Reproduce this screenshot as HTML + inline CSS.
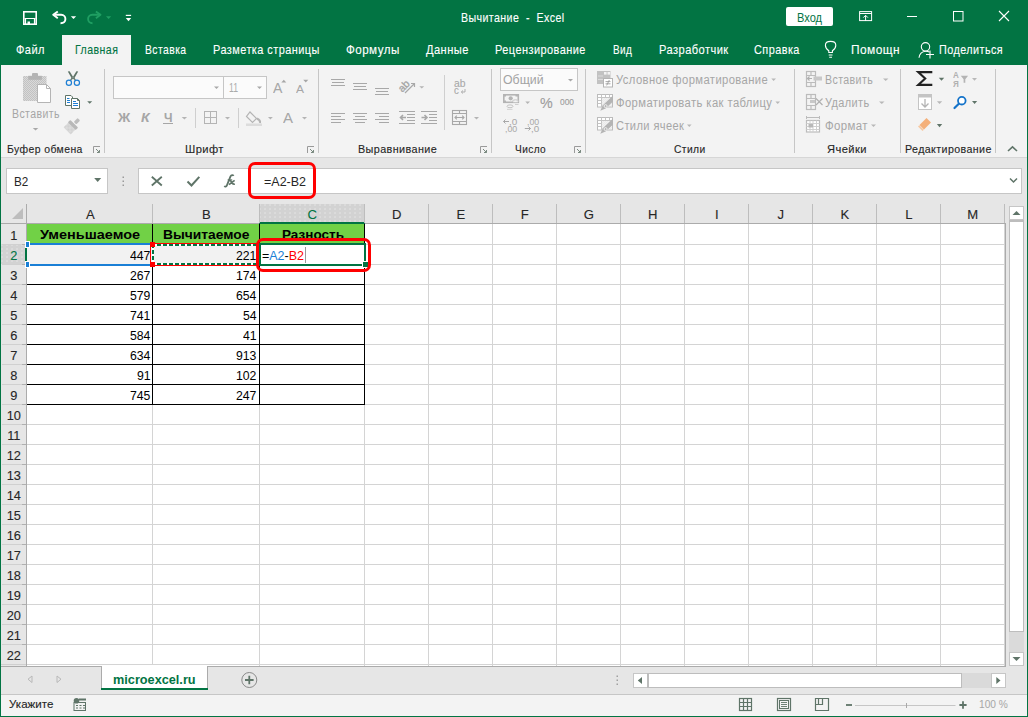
<!DOCTYPE html><html><head><meta charset="utf-8"><style>
html,body{margin:0;padding:0;}
body{width:1028px;height:717px;overflow:hidden;position:relative;background:#fff;font-family:"Liberation Sans",sans-serif;}
.t{position:absolute;white-space:pre;line-height:1;transform-origin:0 0;}
.r{position:absolute;}
svg.ov{position:absolute;left:0;top:0;}
</style></head><body>
<div class="r" style="left:0px;top:0px;width:1028px;height:65px;background:#027443;"></div>
<div class="r" style="left:0px;top:65px;width:1028px;height:92px;background:#f3f3f3;"></div>
<div class="r" style="left:0px;top:157px;width:1028px;height:1px;background:#d6d6d6;"></div>
<div class="r" style="left:0px;top:158px;width:1028px;height:46px;background:#e6e6e6;"></div>
<div class="r" style="left:62px;top:35px;width:69px;height:30px;background:#f3f3f3;"></div>
<div class="t" style="left:461.40px;top:12.00px;font-size:12.602px;color:#ffffff;transform:scaleX(0.8450);letter-spacing:0.473px;-webkit-text-stroke:0.12px currentColor;">Вычитание  -  Excel</div>
<div class="r" style="left:786px;top:7px;width:47px;height:19px;background:#ffffff;border-radius:2px;"></div>
<div class="t" style="left:797.00px;top:12.00px;font-size:12.500px;color:#027443;transform:scaleX(0.8842);">Вход</div>
<div class="t" style="left:16.40px;top:44.00px;font-size:12.398px;color:#ffffff;transform:scaleX(0.8938);letter-spacing:0.503px;-webkit-text-stroke:0.12px currentColor;">Файл</div>
<div class="t" style="left:74.60px;top:44.00px;font-size:12.398px;color:#027443;transform:scaleX(0.8540);letter-spacing:0.527px;-webkit-text-stroke:0.12px currentColor;">Главная</div>
<div class="t" style="left:145.40px;top:44.00px;font-size:12.398px;color:#ffffff;transform:scaleX(0.8352);letter-spacing:0.539px;-webkit-text-stroke:0.12px currentColor;">Вставка</div>
<div class="t" style="left:213.00px;top:44.00px;font-size:12.398px;color:#ffffff;transform:scaleX(0.8837);letter-spacing:0.509px;-webkit-text-stroke:0.12px currentColor;">Разметка страницы</div>
<div class="t" style="left:345.90px;top:44.00px;font-size:12.398px;color:#ffffff;transform:scaleX(0.9396);letter-spacing:0.479px;-webkit-text-stroke:0.12px currentColor;">Формулы</div>
<div class="t" style="left:426.00px;top:44.00px;font-size:12.398px;color:#ffffff;transform:scaleX(0.8985);letter-spacing:0.501px;-webkit-text-stroke:0.12px currentColor;">Данные</div>
<div class="t" style="left:495.00px;top:44.00px;font-size:12.398px;color:#ffffff;transform:scaleX(0.8852);letter-spacing:0.508px;-webkit-text-stroke:0.12px currentColor;">Рецензирование</div>
<div class="t" style="left:612.80px;top:44.00px;font-size:12.398px;color:#ffffff;transform:scaleX(0.8026);letter-spacing:0.561px;-webkit-text-stroke:0.12px currentColor;">Вид</div>
<div class="t" style="left:658.60px;top:44.00px;font-size:12.398px;color:#ffffff;transform:scaleX(0.8968);letter-spacing:0.502px;-webkit-text-stroke:0.12px currentColor;">Разработчик</div>
<div class="t" style="left:754.00px;top:44.00px;font-size:12.398px;color:#ffffff;transform:scaleX(0.8797);letter-spacing:0.512px;-webkit-text-stroke:0.12px currentColor;">Справка</div>
<div class="t" style="left:850.60px;top:44.00px;font-size:12.398px;color:#ffffff;transform:scaleX(0.9621);letter-spacing:0.468px;-webkit-text-stroke:0.12px currentColor;">Помощн</div>
<div class="t" style="left:938.50px;top:44.00px;font-size:12.398px;color:#ffffff;transform:scaleX(0.8727);letter-spacing:0.516px;-webkit-text-stroke:0.12px currentColor;">Поделиться</div>
<div class="t" style="left:6.60px;top:144.00px;font-size:10.974px;color:#262626;transform:scaleX(0.9520);letter-spacing:0.420px;-webkit-text-stroke:0.12px currentColor;">Буфер обмена</div>
<div class="t" style="left:184.60px;top:144.00px;font-size:10.974px;color:#262626;transform:scaleX(1.0193);letter-spacing:0.392px;-webkit-text-stroke:0.12px currentColor;">Шрифт</div>
<div class="t" style="left:357.60px;top:144.00px;font-size:10.974px;color:#262626;transform:scaleX(0.9850);letter-spacing:0.406px;-webkit-text-stroke:0.12px currentColor;">Выравнивание</div>
<div class="t" style="left:514.60px;top:144.00px;font-size:10.974px;color:#262626;transform:scaleX(0.9220);letter-spacing:0.434px;-webkit-text-stroke:0.12px currentColor;">Число</div>
<div class="t" style="left:674.30px;top:144.00px;font-size:10.974px;color:#262626;transform:scaleX(0.9362);letter-spacing:0.427px;-webkit-text-stroke:0.12px currentColor;">Стили</div>
<div class="t" style="left:827.00px;top:144.00px;font-size:10.974px;color:#262626;transform:scaleX(1.0161);letter-spacing:0.394px;-webkit-text-stroke:0.12px currentColor;">Ячейки</div>
<div class="t" style="left:904.60px;top:144.00px;font-size:10.974px;color:#262626;transform:scaleX(0.9713);letter-spacing:0.412px;-webkit-text-stroke:0.12px currentColor;">Редактирование</div>
<div class="r" style="left:104px;top:69px;width:1px;height:84px;background:#c6c6c6;"></div>
<div class="r" style="left:318px;top:69px;width:1px;height:84px;background:#c6c6c6;"></div>
<div class="r" style="left:491px;top:69px;width:1px;height:84px;background:#c6c6c6;"></div>
<div class="r" style="left:585px;top:69px;width:1px;height:84px;background:#c6c6c6;"></div>
<div class="r" style="left:794px;top:69px;width:1px;height:84px;background:#c6c6c6;"></div>
<div class="r" style="left:900px;top:69px;width:1px;height:84px;background:#c6c6c6;"></div>
<div class="r" style="left:995px;top:69px;width:1px;height:84px;background:#c6c6c6;"></div>
<div class="t" style="left:11.60px;top:108.00px;font-size:12.500px;color:#a6a6a6;transform:scaleX(0.8417);letter-spacing:0.475px;">Вставить</div>
<div class="r" style="left:113px;top:76px;width:111px;height:23px;background:#fbfbfb;box-sizing:border-box;border:1px solid #c6c6c6;"></div>
<div class="r" style="left:223px;top:76px;width:44px;height:23px;background:#fbfbfb;box-sizing:border-box;border:1px solid #c6c6c6;"></div>
<div class="t" style="left:228.50px;top:82.00px;font-size:12.500px;color:#ababab;transform:scaleX(0.6936);">11</div>
<div class="t" style="left:273.30px;top:80.00px;font-size:15.407px;color:#a6a6a6;transform:scaleX(0.9147);">A</div>
<div class="t" style="left:295.90px;top:84.00px;font-size:11.192px;color:#a6a6a6;transform:scaleX(1.0717);">A</div>
<div class="t" style="left:117.84px;top:112.00px;font-size:12.791px;color:#a6a6a6;font-weight:bold;transform:scaleX(1.0630);">Ж</div>
<div class="t" style="left:141.00px;top:112.00px;font-size:12.791px;color:#a6a6a6;font-weight:bold;transform:scaleX(1.0986);font-style:italic;">К</div>
<div class="t" style="left:164.00px;top:112.00px;font-size:12.791px;color:#a6a6a6;font-weight:bold;transform:scaleX(0.9453);">Ч</div>
<div class="r" style="left:163px;top:123px;width:10px;height:1px;background:#a6a6a6;"></div>
<div class="r" style="left:195px;top:108px;width:1px;height:20px;background:#cfcfcf;"></div>
<div class="r" style="left:238px;top:108px;width:1px;height:20px;background:#cfcfcf;"></div>
<div class="t" style="left:283.00px;top:111.00px;font-size:14.971px;color:#a6a6a6;transform:scaleX(1.0014);">A</div>
<div class="r" style="left:444px;top:75px;width:1px;height:55px;background:#cfcfcf;"></div>
<div class="t" style="left:454.00px;top:78.00px;font-size:10.610px;color:#a8a8a8;transform:scaleX(0.9747);-webkit-text-stroke:0.12px currentColor;">ab</div>
<div class="t" style="left:454.00px;top:86.00px;font-size:10.029px;color:#a8a8a8;transform:scaleX(0.9572);-webkit-text-stroke:0.12px currentColor;">c</div>
<div class="r" style="left:500px;top:68px;width:78px;height:23px;background:#fbfbfb;box-sizing:border-box;border:1px solid #c6c6c6;"></div>
<div class="t" style="left:503.40px;top:74.00px;font-size:12.645px;color:#a3a3a3;transform:scaleX(0.9756);">Общий</div>
<div class="t" style="left:539.50px;top:95.00px;font-size:15.262px;color:#9c9c9c;transform:scaleX(0.9361);-webkit-text-stroke:0.12px currentColor;">%</div>
<div class="t" style="left:560.00px;top:97.00px;font-size:9.593px;color:#9c9c9c;transform:scaleX(0.8749);-webkit-text-stroke:0.12px currentColor;">000</div>
<div class="t" style="left:509.00px;top:119.00px;font-size:8.140px;color:#a8a8a8;transform:scaleX(1.2227);">,0</div>
<div class="t" style="left:505.00px;top:126.00px;font-size:8.140px;color:#a8a8a8;transform:scaleX(1.0872);">,00</div>
<div class="t" style="left:527.00px;top:119.00px;font-size:8.140px;color:#a8a8a8;transform:scaleX(1.0783);">,00</div>
<div class="t" style="left:531.00px;top:126.00px;font-size:8.140px;color:#a8a8a8;transform:scaleX(1.2079);">,0</div>
<div class="t" style="left:616.00px;top:74.00px;font-size:12.500px;color:#a6a6a6;transform:scaleX(0.8992);letter-spacing:0.445px;">Условное форматирование</div>
<div class="t" style="left:616.00px;top:97.00px;font-size:12.500px;color:#a6a6a6;transform:scaleX(0.9002);letter-spacing:0.444px;">Форматировать как таблицу</div>
<div class="t" style="left:616.00px;top:120.00px;font-size:12.500px;color:#a6a6a6;transform:scaleX(0.8863);letter-spacing:0.451px;">Стили ячеек</div>
<div class="t" style="left:825.20px;top:74.00px;font-size:12.500px;color:#a6a6a6;transform:scaleX(0.8474);letter-spacing:0.472px;">Вставить</div>
<div class="t" style="left:825.00px;top:97.00px;font-size:12.500px;color:#a6a6a6;transform:scaleX(0.8759);letter-spacing:0.457px;">Удалить</div>
<div class="t" style="left:825.00px;top:120.00px;font-size:12.500px;color:#a6a6a6;transform:scaleX(0.9144);letter-spacing:0.437px;">Формат</div>
<div class="t" style="left:953.00px;top:71.00px;font-size:8.721px;color:#b0b0b0;font-weight:bold;transform:scaleX(0.9211);">А</div>
<div class="t" style="left:953.00px;top:80.00px;font-size:8.721px;color:#b0b0b0;font-weight:bold;transform:scaleX(0.9250);">Я</div>
<div class="r" style="left:6px;top:168px;width:102px;height:26px;background:#ffffff;box-sizing:border-box;border:1px solid #c6c6c6;"></div>
<div class="t" style="left:13.70px;top:176.00px;font-size:12.936px;color:#262626;transform:scaleX(0.9039);">B2</div>
<div class="r" style="left:138px;top:168px;width:884px;height:26px;background:#ffffff;box-sizing:border-box;border:1px solid #c6c6c6;"></div>
<div class="t" style="left:263.90px;top:176.00px;font-size:12.936px;color:#262626;transform:scaleX(0.9677);">=A2-B2</div>
<div class="r" style="left:1px;top:204px;width:1004px;height:19px;background:#e6e6e6;"></div>
<div class="r" style="left:1px;top:223px;width:1004px;height:1px;background:#ababab;"></div>
<div class="r" style="left:1px;top:224px;width:25px;height:442px;background:#e6e6e6;"></div>
<div class="r" style="left:26px;top:204px;width:1px;height:462px;background:#ababab;"></div>
<div class="r" style="left:27px;top:224px;width:978px;height:442px;background:#ffffff;"></div>
<div class="r" style="left:1005px;top:194px;width:22px;height:472px;background:#e6e6e6;"></div>
<div class="r" style="left:1px;top:244px;width:25px;height:20px;background:#d2d2d2;background-image:radial-gradient(circle at 1px 1px,#e4e4e4 0.5px,transparent 0.9px);background-size:5px 4px;"></div>
<div class="r" style="left:25px;top:244px;width:2px;height:20px;background:#027443;"></div>
<div class="r" style="left:259px;top:204px;width:106px;height:18px;background:#d2d2d2;background-image:radial-gradient(circle at 1px 1px,#e4e4e4 0.5px,transparent 0.9px);background-size:5px 4px;"></div>
<div class="r" style="left:259px;top:222px;width:106px;height:2px;background:#027443;"></div>
<div class="r" style="left:152px;top:224px;width:1px;height:442px;background:#d4d4d4;"></div>
<div class="r" style="left:152px;top:204px;width:1px;height:19px;background:#bdbdbd;"></div>
<div class="r" style="left:259px;top:224px;width:1px;height:442px;background:#d4d4d4;"></div>
<div class="r" style="left:259px;top:204px;width:1px;height:19px;background:#bdbdbd;"></div>
<div class="r" style="left:364px;top:224px;width:1px;height:442px;background:#d4d4d4;"></div>
<div class="r" style="left:364px;top:204px;width:1px;height:19px;background:#bdbdbd;"></div>
<div class="r" style="left:428px;top:224px;width:1px;height:442px;background:#d4d4d4;"></div>
<div class="r" style="left:428px;top:204px;width:1px;height:19px;background:#bdbdbd;"></div>
<div class="r" style="left:492px;top:224px;width:1px;height:442px;background:#d4d4d4;"></div>
<div class="r" style="left:492px;top:204px;width:1px;height:19px;background:#bdbdbd;"></div>
<div class="r" style="left:556px;top:224px;width:1px;height:442px;background:#d4d4d4;"></div>
<div class="r" style="left:556px;top:204px;width:1px;height:19px;background:#bdbdbd;"></div>
<div class="r" style="left:620px;top:224px;width:1px;height:442px;background:#d4d4d4;"></div>
<div class="r" style="left:620px;top:204px;width:1px;height:19px;background:#bdbdbd;"></div>
<div class="r" style="left:684px;top:224px;width:1px;height:442px;background:#d4d4d4;"></div>
<div class="r" style="left:684px;top:204px;width:1px;height:19px;background:#bdbdbd;"></div>
<div class="r" style="left:748px;top:224px;width:1px;height:442px;background:#d4d4d4;"></div>
<div class="r" style="left:748px;top:204px;width:1px;height:19px;background:#bdbdbd;"></div>
<div class="r" style="left:812px;top:224px;width:1px;height:442px;background:#d4d4d4;"></div>
<div class="r" style="left:812px;top:204px;width:1px;height:19px;background:#bdbdbd;"></div>
<div class="r" style="left:876px;top:224px;width:1px;height:442px;background:#d4d4d4;"></div>
<div class="r" style="left:876px;top:204px;width:1px;height:19px;background:#bdbdbd;"></div>
<div class="r" style="left:940px;top:224px;width:1px;height:442px;background:#d4d4d4;"></div>
<div class="r" style="left:940px;top:204px;width:1px;height:19px;background:#bdbdbd;"></div>
<div class="r" style="left:1004px;top:224px;width:1px;height:442px;background:#d4d4d4;"></div>
<div class="r" style="left:1004px;top:204px;width:1px;height:19px;background:#bdbdbd;"></div>
<div class="r" style="left:27px;top:244px;width:978px;height:1px;background:#d4d4d4;"></div>
<div class="r" style="left:2px;top:244px;width:20px;height:1px;background:#d0d0d0;"></div>
<div class="r" style="left:22px;top:244px;width:4px;height:1px;background:#b0b0b0;"></div>
<div class="r" style="left:27px;top:264px;width:978px;height:1px;background:#d4d4d4;"></div>
<div class="r" style="left:2px;top:264px;width:20px;height:1px;background:#d0d0d0;"></div>
<div class="r" style="left:22px;top:264px;width:4px;height:1px;background:#b0b0b0;"></div>
<div class="r" style="left:27px;top:284px;width:978px;height:1px;background:#d4d4d4;"></div>
<div class="r" style="left:2px;top:284px;width:20px;height:1px;background:#d0d0d0;"></div>
<div class="r" style="left:22px;top:284px;width:4px;height:1px;background:#b0b0b0;"></div>
<div class="r" style="left:27px;top:304px;width:978px;height:1px;background:#d4d4d4;"></div>
<div class="r" style="left:2px;top:304px;width:20px;height:1px;background:#d0d0d0;"></div>
<div class="r" style="left:22px;top:304px;width:4px;height:1px;background:#b0b0b0;"></div>
<div class="r" style="left:27px;top:324px;width:978px;height:1px;background:#d4d4d4;"></div>
<div class="r" style="left:2px;top:324px;width:20px;height:1px;background:#d0d0d0;"></div>
<div class="r" style="left:22px;top:324px;width:4px;height:1px;background:#b0b0b0;"></div>
<div class="r" style="left:27px;top:344px;width:978px;height:1px;background:#d4d4d4;"></div>
<div class="r" style="left:2px;top:344px;width:20px;height:1px;background:#d0d0d0;"></div>
<div class="r" style="left:22px;top:344px;width:4px;height:1px;background:#b0b0b0;"></div>
<div class="r" style="left:27px;top:364px;width:978px;height:1px;background:#d4d4d4;"></div>
<div class="r" style="left:2px;top:364px;width:20px;height:1px;background:#d0d0d0;"></div>
<div class="r" style="left:22px;top:364px;width:4px;height:1px;background:#b0b0b0;"></div>
<div class="r" style="left:27px;top:384px;width:978px;height:1px;background:#d4d4d4;"></div>
<div class="r" style="left:2px;top:384px;width:20px;height:1px;background:#d0d0d0;"></div>
<div class="r" style="left:22px;top:384px;width:4px;height:1px;background:#b0b0b0;"></div>
<div class="r" style="left:27px;top:404px;width:978px;height:1px;background:#d4d4d4;"></div>
<div class="r" style="left:2px;top:404px;width:20px;height:1px;background:#d0d0d0;"></div>
<div class="r" style="left:22px;top:404px;width:4px;height:1px;background:#b0b0b0;"></div>
<div class="r" style="left:27px;top:424px;width:978px;height:1px;background:#d4d4d4;"></div>
<div class="r" style="left:2px;top:424px;width:20px;height:1px;background:#d0d0d0;"></div>
<div class="r" style="left:22px;top:424px;width:4px;height:1px;background:#b0b0b0;"></div>
<div class="r" style="left:27px;top:444px;width:978px;height:1px;background:#d4d4d4;"></div>
<div class="r" style="left:2px;top:444px;width:20px;height:1px;background:#d0d0d0;"></div>
<div class="r" style="left:22px;top:444px;width:4px;height:1px;background:#b0b0b0;"></div>
<div class="r" style="left:27px;top:464px;width:978px;height:1px;background:#d4d4d4;"></div>
<div class="r" style="left:2px;top:464px;width:20px;height:1px;background:#d0d0d0;"></div>
<div class="r" style="left:22px;top:464px;width:4px;height:1px;background:#b0b0b0;"></div>
<div class="r" style="left:27px;top:484px;width:978px;height:1px;background:#d4d4d4;"></div>
<div class="r" style="left:2px;top:484px;width:20px;height:1px;background:#d0d0d0;"></div>
<div class="r" style="left:22px;top:484px;width:4px;height:1px;background:#b0b0b0;"></div>
<div class="r" style="left:27px;top:504px;width:978px;height:1px;background:#d4d4d4;"></div>
<div class="r" style="left:2px;top:504px;width:20px;height:1px;background:#d0d0d0;"></div>
<div class="r" style="left:22px;top:504px;width:4px;height:1px;background:#b0b0b0;"></div>
<div class="r" style="left:27px;top:524px;width:978px;height:1px;background:#d4d4d4;"></div>
<div class="r" style="left:2px;top:524px;width:20px;height:1px;background:#d0d0d0;"></div>
<div class="r" style="left:22px;top:524px;width:4px;height:1px;background:#b0b0b0;"></div>
<div class="r" style="left:27px;top:544px;width:978px;height:1px;background:#d4d4d4;"></div>
<div class="r" style="left:2px;top:544px;width:20px;height:1px;background:#d0d0d0;"></div>
<div class="r" style="left:22px;top:544px;width:4px;height:1px;background:#b0b0b0;"></div>
<div class="r" style="left:27px;top:564px;width:978px;height:1px;background:#d4d4d4;"></div>
<div class="r" style="left:2px;top:564px;width:20px;height:1px;background:#d0d0d0;"></div>
<div class="r" style="left:22px;top:564px;width:4px;height:1px;background:#b0b0b0;"></div>
<div class="r" style="left:27px;top:584px;width:978px;height:1px;background:#d4d4d4;"></div>
<div class="r" style="left:2px;top:584px;width:20px;height:1px;background:#d0d0d0;"></div>
<div class="r" style="left:22px;top:584px;width:4px;height:1px;background:#b0b0b0;"></div>
<div class="r" style="left:27px;top:604px;width:978px;height:1px;background:#d4d4d4;"></div>
<div class="r" style="left:2px;top:604px;width:20px;height:1px;background:#d0d0d0;"></div>
<div class="r" style="left:22px;top:604px;width:4px;height:1px;background:#b0b0b0;"></div>
<div class="r" style="left:27px;top:624px;width:978px;height:1px;background:#d4d4d4;"></div>
<div class="r" style="left:2px;top:624px;width:20px;height:1px;background:#d0d0d0;"></div>
<div class="r" style="left:22px;top:624px;width:4px;height:1px;background:#b0b0b0;"></div>
<div class="r" style="left:27px;top:644px;width:978px;height:1px;background:#d4d4d4;"></div>
<div class="r" style="left:2px;top:644px;width:20px;height:1px;background:#d0d0d0;"></div>
<div class="r" style="left:22px;top:644px;width:4px;height:1px;background:#b0b0b0;"></div>
<div class="r" style="left:27px;top:664px;width:978px;height:1px;background:#d4d4d4;"></div>
<div class="r" style="left:2px;top:664px;width:20px;height:1px;background:#d0d0d0;"></div>
<div class="r" style="left:22px;top:664px;width:4px;height:1px;background:#b0b0b0;"></div>
<div class="t" style="left:85.94px;top:208.00px;font-size:13.081px;color:#262626;transform:scaleX(1.0000);-webkit-text-stroke:0.12px currentColor;">A</div>
<div class="t" style="left:201.94px;top:208.00px;font-size:13.081px;color:#262626;transform:scaleX(1.0000);-webkit-text-stroke:0.12px currentColor;">B</div>
<div class="t" style="left:307.58px;top:208.00px;font-size:13.081px;color:#027443;transform:scaleX(1.0000);-webkit-text-stroke:0.12px currentColor;">C</div>
<div class="t" style="left:392.08px;top:208.00px;font-size:13.081px;color:#262626;transform:scaleX(1.0000);-webkit-text-stroke:0.12px currentColor;">D</div>
<div class="t" style="left:456.44px;top:208.00px;font-size:13.081px;color:#262626;transform:scaleX(1.0000);-webkit-text-stroke:0.12px currentColor;">E</div>
<div class="t" style="left:520.80px;top:208.00px;font-size:13.081px;color:#262626;transform:scaleX(1.0000);-webkit-text-stroke:0.12px currentColor;">F</div>
<div class="t" style="left:583.71px;top:208.00px;font-size:13.081px;color:#262626;transform:scaleX(1.0000);-webkit-text-stroke:0.12px currentColor;">G</div>
<div class="t" style="left:648.08px;top:208.00px;font-size:13.081px;color:#262626;transform:scaleX(1.0000);-webkit-text-stroke:0.12px currentColor;">H</div>
<div class="t" style="left:714.98px;top:208.00px;font-size:13.081px;color:#262626;transform:scaleX(1.0000);-webkit-text-stroke:0.12px currentColor;">I</div>
<div class="t" style="left:777.53px;top:208.00px;font-size:13.081px;color:#262626;transform:scaleX(1.0000);-webkit-text-stroke:0.12px currentColor;">J</div>
<div class="t" style="left:840.44px;top:208.00px;font-size:13.081px;color:#262626;transform:scaleX(1.0000);-webkit-text-stroke:0.12px currentColor;">K</div>
<div class="t" style="left:905.16px;top:208.00px;font-size:13.081px;color:#262626;transform:scaleX(1.0000);-webkit-text-stroke:0.12px currentColor;">L</div>
<div class="t" style="left:967.35px;top:208.00px;font-size:13.081px;color:#262626;transform:scaleX(1.0000);-webkit-text-stroke:0.12px currentColor;">M</div>
<div class="t" style="left:10.24px;top:230.00px;font-size:12.791px;color:#262626;transform:scaleX(1.0000);-webkit-text-stroke:0.12px currentColor;">1</div>
<div class="t" style="left:10.24px;top:250.00px;font-size:12.791px;color:#027443;transform:scaleX(1.0000);-webkit-text-stroke:0.12px currentColor;">2</div>
<div class="t" style="left:10.24px;top:270.00px;font-size:12.791px;color:#262626;transform:scaleX(1.0000);-webkit-text-stroke:0.12px currentColor;">3</div>
<div class="t" style="left:10.24px;top:290.00px;font-size:12.791px;color:#262626;transform:scaleX(1.0000);-webkit-text-stroke:0.12px currentColor;">4</div>
<div class="t" style="left:10.24px;top:310.00px;font-size:12.791px;color:#262626;transform:scaleX(1.0000);-webkit-text-stroke:0.12px currentColor;">5</div>
<div class="t" style="left:10.24px;top:330.00px;font-size:12.791px;color:#262626;transform:scaleX(1.0000);-webkit-text-stroke:0.12px currentColor;">6</div>
<div class="t" style="left:10.24px;top:350.00px;font-size:12.791px;color:#262626;transform:scaleX(1.0000);-webkit-text-stroke:0.12px currentColor;">7</div>
<div class="t" style="left:10.24px;top:370.00px;font-size:12.791px;color:#262626;transform:scaleX(1.0000);-webkit-text-stroke:0.12px currentColor;">8</div>
<div class="t" style="left:10.24px;top:390.00px;font-size:12.791px;color:#262626;transform:scaleX(1.0000);-webkit-text-stroke:0.12px currentColor;">9</div>
<div class="t" style="left:6.69px;top:410.00px;font-size:12.791px;color:#262626;transform:scaleX(1.0000);-webkit-text-stroke:0.12px currentColor;">10</div>
<div class="t" style="left:7.16px;top:430.00px;font-size:12.791px;color:#262626;transform:scaleX(1.0000);-webkit-text-stroke:0.12px currentColor;">11</div>
<div class="t" style="left:6.69px;top:450.00px;font-size:12.791px;color:#262626;transform:scaleX(1.0000);-webkit-text-stroke:0.12px currentColor;">12</div>
<div class="t" style="left:6.69px;top:470.00px;font-size:12.791px;color:#262626;transform:scaleX(1.0000);-webkit-text-stroke:0.12px currentColor;">13</div>
<div class="t" style="left:6.69px;top:490.00px;font-size:12.791px;color:#262626;transform:scaleX(1.0000);-webkit-text-stroke:0.12px currentColor;">14</div>
<div class="t" style="left:6.69px;top:510.00px;font-size:12.791px;color:#262626;transform:scaleX(1.0000);-webkit-text-stroke:0.12px currentColor;">15</div>
<div class="t" style="left:6.69px;top:530.00px;font-size:12.791px;color:#262626;transform:scaleX(1.0000);-webkit-text-stroke:0.12px currentColor;">16</div>
<div class="t" style="left:6.69px;top:550.00px;font-size:12.791px;color:#262626;transform:scaleX(1.0000);-webkit-text-stroke:0.12px currentColor;">17</div>
<div class="t" style="left:6.69px;top:570.00px;font-size:12.791px;color:#262626;transform:scaleX(1.0000);-webkit-text-stroke:0.12px currentColor;">18</div>
<div class="t" style="left:6.69px;top:590.00px;font-size:12.791px;color:#262626;transform:scaleX(1.0000);-webkit-text-stroke:0.12px currentColor;">19</div>
<div class="t" style="left:6.69px;top:610.00px;font-size:12.791px;color:#262626;transform:scaleX(1.0000);-webkit-text-stroke:0.12px currentColor;">20</div>
<div class="t" style="left:6.69px;top:630.00px;font-size:12.791px;color:#262626;transform:scaleX(1.0000);-webkit-text-stroke:0.12px currentColor;">21</div>
<div class="t" style="left:6.69px;top:650.00px;font-size:12.791px;color:#262626;transform:scaleX(1.0000);-webkit-text-stroke:0.12px currentColor;">22</div>
<div class="r" style="left:1005px;top:223px;width:1px;height:443px;background:#ababab;"></div>
<div class="r" style="left:1009px;top:206px;width:15px;height:460px;background:#e6e6e6;"></div>
<div class="r" style="left:1009px;top:206px;width:15px;height:14px;background:#ffffff;box-sizing:border-box;border:1px solid #c6c6c6;"></div>
<div class="r" style="left:1009px;top:220px;width:15px;height:412px;background:#ffffff;box-sizing:border-box;border:1px solid #bdbdbd;border-top:2px solid #bdbdbd;"></div>
<div class="r" style="left:1009px;top:632px;width:15px;height:20px;background:#dadada;"></div>
<div class="r" style="left:1009px;top:652px;width:15px;height:14px;background:#ffffff;box-sizing:border-box;border:1px solid #c6c6c6;"></div>
<div class="r" style="left:27px;top:224px;width:337px;height:20px;background:#71d146;"></div>
<div class="r" style="left:27px;top:245px;width:125px;height:19px;background:#f2f2f2;"></div>
<div class="r" style="left:153px;top:245px;width:106px;height:19px;background:#f2f2f2;"></div>
<div class="r" style="left:27px;top:244px;width:338px;height:1px;background:#000000;"></div>
<div class="r" style="left:27px;top:264px;width:338px;height:1px;background:#000000;"></div>
<div class="r" style="left:27px;top:284px;width:338px;height:1px;background:#000000;"></div>
<div class="r" style="left:27px;top:304px;width:338px;height:1px;background:#000000;"></div>
<div class="r" style="left:27px;top:324px;width:338px;height:1px;background:#000000;"></div>
<div class="r" style="left:27px;top:344px;width:338px;height:1px;background:#000000;"></div>
<div class="r" style="left:27px;top:364px;width:338px;height:1px;background:#000000;"></div>
<div class="r" style="left:27px;top:384px;width:338px;height:1px;background:#000000;"></div>
<div class="r" style="left:27px;top:404px;width:338px;height:1px;background:#000000;"></div>
<div class="r" style="left:152px;top:224px;width:1px;height:181px;background:#000000;"></div>
<div class="r" style="left:259px;top:224px;width:1px;height:181px;background:#000000;"></div>
<div class="r" style="left:364px;top:224px;width:1px;height:181px;background:#000000;"></div>
<div class="t" style="left:129.70px;top:249.00px;font-size:13.663px;color:#000000;transform:scaleX(0.8951);">447</div>
<div class="t" style="left:236.20px;top:249.00px;font-size:13.663px;color:#000000;transform:scaleX(0.8951);">221</div>
<div class="t" style="left:129.70px;top:269.00px;font-size:13.663px;color:#000000;transform:scaleX(0.8951);">267</div>
<div class="t" style="left:236.20px;top:269.00px;font-size:13.663px;color:#000000;transform:scaleX(0.8951);">174</div>
<div class="t" style="left:129.70px;top:289.00px;font-size:13.663px;color:#000000;transform:scaleX(0.8951);">579</div>
<div class="t" style="left:236.20px;top:289.00px;font-size:13.663px;color:#000000;transform:scaleX(0.8951);">654</div>
<div class="t" style="left:129.70px;top:309.00px;font-size:13.663px;color:#000000;transform:scaleX(0.8951);">741</div>
<div class="t" style="left:243.00px;top:309.00px;font-size:13.663px;color:#000000;transform:scaleX(0.8951);">54</div>
<div class="t" style="left:129.70px;top:329.00px;font-size:13.663px;color:#000000;transform:scaleX(0.8951);">584</div>
<div class="t" style="left:243.00px;top:329.00px;font-size:13.663px;color:#000000;transform:scaleX(0.8951);">41</div>
<div class="t" style="left:129.70px;top:349.00px;font-size:13.663px;color:#000000;transform:scaleX(0.8951);">634</div>
<div class="t" style="left:236.20px;top:349.00px;font-size:13.663px;color:#000000;transform:scaleX(0.8951);">913</div>
<div class="t" style="left:136.50px;top:369.00px;font-size:13.663px;color:#000000;transform:scaleX(0.8951);">91</div>
<div class="t" style="left:236.20px;top:369.00px;font-size:13.663px;color:#000000;transform:scaleX(0.8951);">102</div>
<div class="t" style="left:129.70px;top:389.00px;font-size:13.663px;color:#000000;transform:scaleX(0.8951);">745</div>
<div class="t" style="left:236.20px;top:389.00px;font-size:13.663px;color:#000000;transform:scaleX(0.8951);">247</div>
<div class="t" style="left:39.70px;top:228.00px;font-size:13.081px;color:#000000;font-weight:bold;transform:scaleX(1.1069);">Уменьшаемое</div>
<div class="t" style="left:163.30px;top:228.00px;font-size:13.081px;color:#000000;font-weight:bold;transform:scaleX(1.0561);">Вычитаемое</div>
<div class="t" style="left:282.00px;top:228.00px;font-size:13.081px;color:#000000;font-weight:bold;transform:scaleX(1.0344);">Разность</div>
<div class="r" style="left:27px;top:243px;width:125px;height:2px;background:#1a7fd6;"></div>
<div class="r" style="left:27px;top:264px;width:125px;height:2px;background:#1a7fd6;"></div>
<div class="r" style="left:26px;top:242px;width:3px;height:5px;background:#1a7fd6;outline:1px solid #fff;"></div>
<div class="r" style="left:26px;top:262px;width:3px;height:5px;background:#1a7fd6;outline:1px solid #fff;"></div>
<div class="r" style="left:150px;top:243px;width:110px;height:1px;background:#ff0000;"></div>
<div class="r" style="left:150px;top:265px;width:110px;height:1px;background:#ff0000;"></div>
<div class="r" style="left:150px;top:243px;width:1px;height:23px;background:#ff0000;"></div>
<div class="r" style="left:151px;top:244px;width:108px;height:2px;background:repeating-linear-gradient(90deg,#027443 0 4px,#ffffff 4px 6px);"></div>
<div class="r" style="left:151px;top:263px;width:108px;height:2px;background:repeating-linear-gradient(90deg,#027443 0 4px,#ffffff 4px 6px);"></div>
<div class="r" style="left:152px;top:244px;width:2px;height:21px;background:repeating-linear-gradient(180deg,#027443 0 4px,#ffffff 4px 6px);"></div>
<div class="r" style="left:150px;top:242px;width:5px;height:5px;background:#ff0000;"></div>
<div class="r" style="left:150px;top:262px;width:5px;height:5px;background:#ff0000;"></div>
<div class="r" style="left:259px;top:243px;width:107px;height:2px;background:#027443;"></div>
<div class="r" style="left:259px;top:264px;width:107px;height:2px;background:#027443;"></div>
<div class="r" style="left:364px;top:243px;width:2px;height:23px;background:#027443;"></div>
<div class="r" style="left:260px;top:245px;width:104px;height:19px;background:#ffffff;"></div>
<div class="r" style="left:259px;top:245px;width:2px;height:19px;background:#027443;"></div>
<div class="r" style="left:363px;top:262px;width:5px;height:5px;background:#027443;outline:1px solid #fff;"></div>
<div class="t" style="left:262.40px;top:249.00px;font-size:13.081px;transform:scaleX(0.9547);"><span style="color:#000000">=</span><span style="color:#1a7fd6">A2</span><span style="color:#000000">-</span><span style="color:#ff0000">B2</span></div>
<div class="r" style="left:305px;top:247px;width:1px;height:16px;background:#9a9a9a;"></div>
<div class="r" style="left:1px;top:666px;width:1026px;height:28px;background:#e6e6e6;"></div>
<div class="r" style="left:1px;top:666px;width:101px;height:1px;background:#ababab;"></div>
<div class="r" style="left:101px;top:666px;width:1px;height:24px;background:#ababab;"></div>
<div class="r" style="left:207px;top:666px;width:799px;height:1px;background:#ababab;"></div>
<div class="r" style="left:207px;top:666px;width:1px;height:24px;background:#ababab;"></div>
<div class="r" style="left:102px;top:665px;width:105px;height:25px;background:#ffffff;"></div>
<div class="r" style="left:1px;top:664px;width:25px;height:1px;background:#cfcfcf;"></div>
<div class="r" style="left:101px;top:688px;width:107px;height:2px;background:#027443;"></div>
<div class="t" style="left:113.10px;top:673.00px;font-size:13.081px;color:#027443;font-weight:bold;transform:scaleX(0.9710);">microexcel.ru</div>
<div class="r" style="left:633px;top:673px;width:15px;height:15px;background:#ffffff;box-sizing:border-box;border:1px solid #c6c6c6;"></div>
<div class="r" style="left:647px;top:673px;width:315px;height:15px;background:#ffffff;box-sizing:border-box;border:1px solid #bdbdbd;border-left:2px solid #bdbdbd;"></div>
<div class="r" style="left:962px;top:673px;width:29px;height:15px;background:#dadada;"></div>
<div class="r" style="left:991px;top:673px;width:15px;height:15px;background:#ffffff;box-sizing:border-box;border:1px solid #c6c6c6;"></div>
<div class="r" style="left:1px;top:694px;width:1026px;height:1px;background:#c6c6c6;"></div>
<div class="r" style="left:1px;top:695px;width:1026px;height:21px;background:#f3f3f3;"></div>
<div class="t" style="left:8.90px;top:698.00px;font-size:11.628px;color:#262626;transform:scaleX(0.9954);-webkit-text-stroke:0.12px currentColor;">Укажите</div>
<div class="t" style="left:979.00px;top:699.00px;font-size:11.192px;color:#a6a6a6;transform:scaleX(0.9108);">100 %</div>
<div class="r" style="left:0px;top:65px;width:1px;height:652px;background:#027443;"></div>
<div class="r" style="left:1027px;top:65px;width:1px;height:652px;background:#027443;"></div>
<div class="r" style="left:0px;top:716px;width:1028px;height:1px;background:#027443;"></div>
<svg class="ov" width="1028" height="717" viewBox="0 0 1028 717">
<rect x="23.8" y="11.8" width="12.4" height="12.4" fill="none" stroke="#ffffff" stroke-width="1.6"/>
<path d="M24.5 18.5H35.5M25.5 18.5V24.5M34.5 18.5V24.5" stroke="#ffffff" stroke-width="1.2" fill="none"/>
<rect x="27.5" y="21.5" width="2.5" height="3" fill="#ffffff"/>
<path d="M54.5 14.8H61.2C63.9 14.8 65.4 16.8 65.4 19C65.4 21.5 63.5 23.2 60.5 23.2" stroke="#ffffff" stroke-width="1.9" fill="none"/>
<path d="M57.8 11.4L53.2 14.8L57.8 18.2" stroke="#ffffff" stroke-width="1.9" fill="none" stroke-linejoin="round"/>
<path d="M70.8 16.2H76.2L73.5 19Z" fill="#ffffff"/>
<path d="M99.5 14.8H92.3C89.6 14.8 88.1 16.8 88.1 19C88.1 21.5 90 23.2 92.5 23.2" stroke="#1f9e62" stroke-width="1.9" fill="none"/>
<path d="M95.9 11.4L100.5 14.8L95.9 18.2" stroke="#1f9e62" stroke-width="1.9" fill="none" stroke-linejoin="round"/>
<path d="M106 16.2H111.2L108.6 19Z" fill="#1f9e62"/>
<rect x="125.8" y="14.8" width="5.3" height="1.2" fill="#ffffff"/><path d="M125.8 18H131.2L128.5 21.2Z" fill="#ffffff"/>
<rect x="859.6" y="11.6" width="12" height="9" fill="none" stroke="#ffffff" stroke-width="1"/><path d="M859.6 13.5H871.6" stroke="#ffffff" stroke-width="1"/><path d="M865.6 21V15.5M863.3 17.6L865.6 15.3L867.9 17.6" stroke="#ffffff" stroke-width="1" fill="none"/>
<path d="M907 16.5H917" stroke="#ffffff" stroke-width="1"/>
<rect x="953.5" y="11.5" width="9.5" height="9.5" fill="none" stroke="#ffffff" stroke-width="1"/>
<path d="M999 11L1009 21M1009 11L999 21" stroke="#ffffff" stroke-width="1.1"/>
<path d="M828.8 52.5V50.8C826.6 49.2 825.4 47.3 825.4 45.2C825.4 42.8 827.6 41.4 830.6 41.4C833.6 41.4 835.8 42.8 835.8 45.2C835.8 47.3 834.6 49.2 832.4 50.8V52.5Z" stroke="#ffffff" stroke-width="1.1" fill="none"/><path d="M828.7 55H832.5M829.2 57.2H832" stroke="#ffffff" stroke-width="1.1"/>
<circle cx="925.5" cy="46.8" r="4.2" stroke="#ffffff" stroke-width="1.1" fill="none"/><path d="M919 57.8C919.5 54 922 51.5 925.5 51.2C927 51.1 928.3 51.4 929.4 52" stroke="#ffffff" stroke-width="1.1" fill="none"/><path d="M926 54.5H934M930 50.5V58.5" stroke="#ffffff" stroke-width="1.1"/>
<path d="M93.5 153V146.5H100" stroke="#9a9a9a" stroke-width="1" fill="none"/><path d="M96 149L99.5 152.5M99.5 150V152.5H97" stroke="#7a8a80" stroke-width="1" fill="none"/>
<path d="M307.5 153V146.5H314" stroke="#9a9a9a" stroke-width="1" fill="none"/><path d="M310 149L313.5 152.5M313.5 150V152.5H311" stroke="#7a8a80" stroke-width="1" fill="none"/>
<path d="M480.5 153V146.5H487" stroke="#9a9a9a" stroke-width="1" fill="none"/><path d="M483 149L486.5 152.5M486.5 150V152.5H484" stroke="#7a8a80" stroke-width="1" fill="none"/>
<path d="M574.5 153V146.5H581" stroke="#9a9a9a" stroke-width="1" fill="none"/><path d="M577 149L580.5 152.5M580.5 150V152.5H578" stroke="#7a8a80" stroke-width="1" fill="none"/>
<path d="M1008 151L1012.5 146.8L1017 151" stroke="#5f7468" stroke-width="1.6" fill="none"/>
<defs><pattern id="dots" x="0" y="0" width="2" height="2" patternUnits="userSpaceOnUse"><rect width="2" height="2" fill="#d9d9d9"/><rect width="1" height="1" fill="#c2c2c2"/><rect x="1" y="1" width="1" height="1" fill="#c2c2c2"/></pattern><pattern id="dotsl" x="0" y="0" width="3" height="3" patternUnits="userSpaceOnUse"><rect width="3" height="3" fill="#ffffff"/><rect width="1" height="1" fill="#ececec"/></pattern></defs>
<rect x="23" y="76" width="23.5" height="25" fill="url(#dots)"/>
<rect x="28.2" y="75.8" width="13.7" height="4" fill="#b4b4b4"/><rect x="32" y="73" width="6" height="4" rx="1" fill="#b4b4b4"/>
<path d="M37.5 84.5H46.5L50.5 88.5V102.5H37.5Z" fill="#ffffff" stroke="#b4b4b4" stroke-width="1"/><path d="M46.5 84.5V88.5H50.5" fill="none" stroke="#b4b4b4" stroke-width="1"/>
<path d="M32.8 128H38.3L35.55 130.6Z" fill="#a8a8a8"/>
<path d="M67.8 71.5L69.6 71.2L73.6 77.8L72.4 79.4Z M78.2 71.5L76.4 71.2L72.4 77.8L73.6 79.4Z" fill="#5f7468"/><path d="M72.5 77.5L70.2 80.8M73.5 77.5L75.8 80.8" stroke="#5f7468" stroke-width="1.3"/>
<circle cx="68.9" cy="82.7" r="2.6" stroke="#1e7fd4" stroke-width="1.2" fill="none"/><circle cx="76.9" cy="82.7" r="2.6" stroke="#1e7fd4" stroke-width="1.2" fill="none"/>
<path d="M65.5 95.5H71L72.5 97V105.5H65.5Z" fill="#ffffff" stroke="#5f7468" stroke-width="1"/><path d="M71.5 98.5H77.5L79.5 100.5V108.5H71.5Z" fill="#ffffff" stroke="#5f7468" stroke-width="1"/><path d="M77.5 98.5V100.5H79.5" fill="none" stroke="#5f7468" stroke-width="1"/>
<path d="M67 98.5H69.5M67 100.5H70M67 102.5H70M73 101.5H76M73 103.5H78M73 105.5H78" stroke="#1e7fd4" stroke-width="1"/>
<path d="M87.2 101.2H92.2L89.7 103.8Z" fill="#5f7468"/>
<g transform="rotate(-45 73.5 124.5)"><rect x="64.5" y="119.5" width="6.5" height="10" fill="url(#dots)" opacity="0.75"/><rect x="71" y="119" width="3.5" height="11" rx="0.8" fill="#b8b8b8"/><rect x="75.5" y="122.8" width="5.5" height="3.6" rx="1" fill="#bdbdbd"/></g>
<path d="M214 86.5H219L216.5 89Z" fill="#a8a8a8"/><path d="M257 86.5H262L259.5 89Z" fill="#a8a8a8"/>
<path d="M281.3 82.6H286.3L283.8 79.8Z" fill="#a6a6a6"/>
<path d="M303.2 79.8H308.3L305.75 82.6Z" fill="#a6a6a6"/>
<path d="M181.7 117H187.1L184.4 119.6Z" fill="#b4b4b4"/><path d="M225 117H230L227.5 119.6Z" fill="#b4b4b4"/><path d="M268 117H272.8L270.4 119.6Z" fill="#b4b4b4"/><path d="M302 117H307L304.5 119.6Z" fill="#b4b4b4"/>
<rect x="204.5" y="111.5" width="12" height="12" fill="none" stroke="#b4b4b4" stroke-width="1"/><path d="M210.5 111.5V123.5M204.5 117.5H216.5" stroke="#b4b4b4" stroke-width="1"/>
<path d="M250 112L256.5 118.5L252.5 122.5L246.5 116.5Z" fill="none" stroke="#b4b4b4" stroke-width="1.2"/><path d="M257 118.5C259 119.5 260.5 121 260 123" stroke="#b4b4b4" stroke-width="2" fill="none"/><rect x="246" y="123.5" width="16" height="2.5" fill="#dcdcdc"/>
<rect x="331" y="79" width="14" height="1" fill="#a8a8a8"/>
<rect x="332" y="82" width="12" height="1" fill="#a8a8a8"/>
<rect x="331" y="85" width="14" height="1" fill="#a8a8a8"/>
<rect x="353" y="83" width="14" height="1" fill="#a8a8a8"/>
<rect x="354" y="86" width="12" height="1" fill="#a8a8a8"/>
<rect x="353" y="89" width="14" height="1" fill="#a8a8a8"/>
<rect x="375" y="88" width="14" height="1" fill="#a8a8a8"/>
<rect x="376" y="91" width="12" height="1" fill="#a8a8a8"/>
<rect x="375" y="94" width="14" height="1" fill="#a8a8a8"/>
<rect x="331" y="113" width="14" height="1" fill="#a8a8a8"/>
<rect x="331" y="116" width="10" height="1" fill="#a8a8a8"/>
<rect x="331" y="119" width="14" height="1" fill="#a8a8a8"/>
<rect x="331" y="122" width="10" height="1" fill="#a8a8a8"/>
<rect x="353" y="113" width="14" height="1" fill="#a8a8a8"/>
<rect x="355" y="116" width="10" height="1" fill="#a8a8a8"/>
<rect x="353" y="119" width="14" height="1" fill="#a8a8a8"/>
<rect x="355" y="122" width="10" height="1" fill="#a8a8a8"/>
<rect x="375" y="113" width="14" height="1" fill="#a8a8a8"/>
<rect x="379" y="116" width="10" height="1" fill="#a8a8a8"/>
<rect x="375" y="119" width="14" height="1" fill="#a8a8a8"/>
<rect x="379" y="122" width="10" height="1" fill="#a8a8a8"/>
<rect x="399" y="111" width="16" height="1" fill="#a8a8a8"/>
<rect x="407" y="114" width="8" height="1" fill="#a8a8a8"/>
<rect x="407" y="117" width="8" height="1" fill="#a8a8a8"/>
<rect x="407" y="120" width="8" height="1" fill="#a8a8a8"/>
<rect x="399" y="123" width="16" height="1" fill="#a8a8a8"/>
<path d="M406 117.5H400.5M403 115L400.5 117.5L403 120" stroke="#a8a8a8" stroke-width="1.6" fill="none"/>
<rect x="421" y="111" width="16" height="1" fill="#a8a8a8"/>
<rect x="429" y="114" width="8" height="1" fill="#a8a8a8"/>
<rect x="429" y="117" width="8" height="1" fill="#a8a8a8"/>
<rect x="429" y="120" width="8" height="1" fill="#a8a8a8"/>
<rect x="421" y="123" width="16" height="1" fill="#a8a8a8"/>
<path d="M421.5 117.5H427M424.5 115L427 117.5L424.5 120" stroke="#a8a8a8" stroke-width="1.6" fill="none"/>
<text x="398" y="89.5" font-family="Liberation Sans" font-size="10.5" fill="#a4a4a4" stroke="#a4a4a4" stroke-width="0.3" transform="rotate(-45 404 86)">ab</text>
<path d="M405 93L414.5 83.5M411 83.5H414.5V87" stroke="#a8a8a8" stroke-width="1.2" fill="none"/><path d="M419.3 86.2H424.2L421.75 88.6Z" fill="#b4b4b4"/>
<path d="M465 89V92H461.5M463 90.5L461.3 92L463 93.5" stroke="#a8a8a8" stroke-width="0.9" fill="none"/>
<rect x="452.5" y="110.5" width="14" height="14" fill="none" stroke="#a8a8a8" stroke-width="1.1"/><path d="M452.5 113.5H466.5M452.5 121.5H466.5M459.5 110.5V113.5M459.5 121.5V124.5" stroke="#a8a8a8" stroke-width="1.1"/><path d="M455 117.5H464M456.8 115.7L455 117.5L456.8 119.3M462.2 115.7L464 117.5L462.2 119.3" stroke="#a8a8a8" stroke-width="1.1" fill="none"/>
<path d="M474 117H479L476.5 119.6Z" fill="#b4b4b4"/>
<path d="M568 79H573L570.5 81.6Z" fill="#a8a8a8"/>
<rect x="503.8" y="94.8" width="14.5" height="7.5" fill="none" stroke="#b4b4b4" stroke-width="1.6"/><rect x="503" y="94" width="3" height="2.5" fill="#b4b4b4"/><rect x="515.5" y="94" width="3" height="2.5" fill="#b4b4b4"/><rect x="503" y="100.5" width="3" height="2.5" fill="#b4b4b4"/><circle cx="510.7" cy="98.3" r="2.1" fill="#b4b4b4"/>
<ellipse cx="515.5" cy="101.2" rx="3" ry="1.4" fill="#f3f3f3" stroke="#c4c4c4" stroke-width="1"/><ellipse cx="510" cy="106.3" rx="3" ry="1.4" fill="#f3f3f3" stroke="#c4c4c4" stroke-width="1"/><path d="M515 104.5H518.5M507 109.3H512.5" stroke="#cfcfcf" stroke-width="1"/>
<path d="M525.3 101.5H530L527.65 104Z" fill="#b4b4b4"/>
<path d="M509 121.5H503.5M505.5 119.5L503.5 121.5L505.5 123.5" stroke="#a8a8a8" stroke-width="1" fill="none"/>
<path d="M524.8 128.5H530.5M528.5 126.5L530.5 128.5L528.5 130.5" stroke="#a8a8a8" stroke-width="1" fill="none"/>
<path d="M771.3 78.5H776L773.65 81Z" fill="#b8b8b8"/><path d="M775.4 101.5H780L777.7 104Z" fill="#b8b8b8"/><path d="M687 124.5H691.6L689.3 127Z" fill="#b8b8b8"/>
<rect x="597" y="71" width="13.5" height="13" fill="#c2c2c2"/><rect x="604" y="72" width="2.6" height="2.6" fill="#f3f3f3"/><rect x="607.5" y="72" width="2.6" height="2.6" fill="#f3f3f3"/><rect x="598" y="75.5" width="5" height="1" fill="#dcdcdc"/><rect x="598" y="79" width="5" height="1" fill="#dcdcdc"/><rect x="603.5" y="78.5" width="9" height="8.5" fill="#ffffff" stroke="#b4b4b4" stroke-width="1"/><path d="M605.5 81.6H610.5M605.5 83.8H610.5M609.3 80L606.7 85.4" stroke="#9e9e9e" stroke-width="0.9"/>
<rect x="597.5" y="94.5" width="15" height="12.5" fill="#ffffff" stroke="#bcbcbc" stroke-width="1"/><rect x="602" y="98.0" width="10" height="8.5" fill="url(#dots)" opacity="0.35"/><path d="M597.5 97.5H612.5M601.5 94.5V107.0M597.5 100.5H601.5M597.5 103.5H601.5M605.5 94.5V97.5M609.5 94.5V97.5" stroke="#c4c4c4" stroke-width="1"/><path d="M600.3 110.7L602.8 105.3L613 95.5V101.5L605.6 108.5Z" fill="#b4b4b4"/><circle cx="605.6" cy="106.1" r="1.5" fill="none" stroke="#f3f3f3" stroke-width="0.9"/>
<rect x="597.5" y="117.5" width="15" height="12.5" fill="#ffffff" stroke="#bcbcbc" stroke-width="1"/><rect x="602" y="121.0" width="10" height="8.5" fill="url(#dots)" opacity="0.35"/><path d="M597.5 120.5H612.5M601.5 117.5V130.0M597.5 123.5H601.5M597.5 126.5H601.5M605.5 117.5V120.5M609.5 117.5V120.5" stroke="#c4c4c4" stroke-width="1"/><path d="M600.3 133.7L602.8 128.3L613 118.5V124.5L605.6 131.5Z" fill="#b4b4b4"/><circle cx="605.6" cy="129.1" r="1.5" fill="none" stroke="#f3f3f3" stroke-width="0.9"/>
<path d="M883 78.5H888.4L885.7 81Z" fill="#b8b8b8"/><path d="M879 101.5H884.5L881.75 104Z" fill="#b8b8b8"/><path d="M871 124.5H876L873.5 127Z" fill="#b8b8b8"/>
<rect x="806.5" y="71.5" width="9" height="15" fill="none" stroke="#bcbcbc" stroke-width="1.2"/><path d="M806.5 75.5H815.5M806.5 82.5H815.5M811 82.5V86.5M811 71.5V75.5" stroke="#bcbcbc" stroke-width="1.2"/><rect x="813.5" y="76.5" width="8.5" height="4" fill="#c8c8c8"/><path d="M812 78.5H807.5M809.5 76.5L807.5 78.5L809.5 80.5" stroke="#b0b0b0" stroke-width="1.2" fill="none"/>
<rect x="806.5" y="94.5" width="9" height="15" fill="none" stroke="#bcbcbc" stroke-width="1.2"/><path d="M806.5 98.5H815.5M806.5 105.5H815.5M811 105.5V109.5M811 94.5V98.5" stroke="#bcbcbc" stroke-width="1.2"/><rect x="810" y="100" width="5" height="3" fill="#c8c8c8"/><path d="M816 98.5L822.5 105M822.5 98.5L816 105" stroke="#b0b0b0" stroke-width="1.2"/>
<path d="M806.5 117.5H819.5M806.5 116V119M819.5 116V119" stroke="#bcbcbc" stroke-width="1"/><rect x="806.5" y="120.5" width="13" height="11.5" fill="#ffffff" stroke="#bcbcbc" stroke-width="1.2"/><path d="M806.5 123.5H819.5M806.5 126.5H819.5M806.5 129.5H819.5M810 120.5V132M813 120.5V132M816.5 120.5V132" stroke="#d0d0d0" stroke-width="1"/><rect x="808.5" y="124" width="4.5" height="3.5" fill="#b8b8b8"/>
<path d="M932.3 72.1H918.2L925.2 78.5L918.2 84.9H932.3" stroke="#222222" stroke-width="2.1" fill="none" stroke-linejoin="miter"/>
<path d="M938.8 77.8H944.2L941.5 80.8Z" fill="#5f7468"/>
<path d="M960.8 75.8H968.1L965.3 79.2V82.8H963.6V79.2Z" fill="#b4b4b4"/><path d="M972 78H977L974.5 80.7Z" fill="#b8b8b8"/>
<rect x="918.5" y="94.5" width="13" height="15" fill="#ffffff" stroke="#c4c4c4" stroke-width="1"/><rect x="918" y="94" width="14" height="3.5" fill="#c4c4c4"/><path d="M925 99V107M921.5 103.5L925 107L928.5 103.5" stroke="#b4b4b4" stroke-width="1.3" fill="none"/>
<path d="M936.9 101.2H942.2L939.55 104Z" fill="#b8b8b8"/>
<circle cx="961.8" cy="100.7" r="3.8" fill="#ffffff" stroke="#1473c9" stroke-width="1.8"/><path d="M958.8 103.8L954.5 108" stroke="#1473c9" stroke-width="2.2" stroke-linecap="round"/>
<path d="M972 101H977.2L974.6 104Z" fill="#5f7468"/>
<path d="M926.5 118L931 122.5L924 129.5L919.5 125Z" fill="#f4b07a"/><path d="M919.3 125.2L923.8 129.7L922.5 131L918 126.5Z" fill="#f7c9a2"/>
<path d="M936.9 124.1H942.2L939.55 127.2Z" fill="#5f7468"/>
<path d="M94.2 178H101.2L97.7 182Z" fill="#5f7468"/>
<rect x="122.5" y="176.5" width="1.5" height="1.5" fill="#9a9a9a"/><rect x="122.5" y="180.5" width="1.5" height="1.5" fill="#9a9a9a"/><rect x="122.5" y="184.5" width="1.5" height="1.5" fill="#9a9a9a"/>
<path d="M151.8 176.8L161.8 185.5M161.8 176.8L151.8 185.5" stroke="#5f7468" stroke-width="1.8"/>
<path d="M187.5 181.5L191.5 185.5L199.3 176.8" stroke="#5f7468" stroke-width="2" fill="none"/>
<path d="M233.6 175.9C233 174.9 231.3 174.8 230.5 176.4L227 185.2C226.4 186.7 225.2 186.9 224.2 186.1" stroke="#5f7468" stroke-width="1.8" fill="none"/><path d="M227.6 179.9H232.2" stroke="#5f7468" stroke-width="1.1"/><path d="M229 180.4C230.5 180 231 181 231.6 182.2C232.2 183.5 233 184.6 234.8 184.1M234.6 180.4L229 184.6" stroke="#5f7468" stroke-width="1.7" fill="none"/>
<path d="M1010 178.5L1013.5 182L1017 178.5" stroke="#5f7468" stroke-width="1.5" fill="none"/>
<path d="M12 219H23V208Z" fill="#bdbdbd"/>
<path d="M1012.5 215H1020.5L1016.5 211Z" fill="#5f7468"/>
<path d="M1012.5 657H1020.5L1016.5 661Z" fill="#5f7468"/>
<rect x="257.5" y="239.5" width="112" height="31" rx="5.5" fill="none" stroke="#ff0000" stroke-width="3"/>
<rect x="249.5" y="163.5" width="65" height="34" rx="5.5" fill="none" stroke="#ff0000" stroke-width="3"/>
<path d="M32 676L28 679.2L32 682.5Z" fill="none" stroke="#b8b8b8" stroke-width="1"/><path d="M57 676L61 679.2L57 682.5Z" fill="none" stroke="#b8b8b8" stroke-width="1"/>
<circle cx="249.3" cy="680" r="7.5" fill="none" stroke="#8a8a8a" stroke-width="1"/><path d="M245 680H253.6M249.3 675.7V684.3" stroke="#5f7468" stroke-width="1.8"/>
<rect x="616.5" y="675.5" width="1.5" height="1.5" fill="#a0a0a0"/><rect x="616.5" y="679.5" width="1.5" height="1.5" fill="#a0a0a0"/><rect x="616.5" y="683.5" width="1.5" height="1.5" fill="#a0a0a0"/>
<path d="M637.8 680.5L642 677V684Z" fill="#5f7468"/>
<path d="M1000.5 680.5L996.3 677V684Z" fill="#5f7468"/>
<rect x="74" y="702.5" width="11.5" height="8" fill="none" stroke="#5f7468" stroke-width="1"/><rect x="79" y="698.5" width="7" height="2" fill="#5f7468"/><circle cx="76.5" cy="700.8" r="2.8" fill="#5f7468"/><path d="M76 705.5H78M79.5 705.5H81.5M83 705.5H85M76 708H78M79.5 708H81.5M83 708H85" stroke="#5f7468" stroke-width="1"/>
<rect x="739.5" y="698.5" width="12" height="12" fill="none" stroke="#5f7468" stroke-width="1.2"/><path d="M743.5 698.5V710.5M747.5 698.5V710.5M739.5 702.5H751.5M739.5 706.5H751.5" stroke="#5f7468" stroke-width="1.2"/>
<rect x="777.5" y="698.5" width="13" height="12" fill="none" stroke="#5f7468" stroke-width="1.2"/><rect x="779.5" y="700.5" width="9" height="8" fill="none" stroke="#5f7468" stroke-width="1"/><path d="M781 702.5H787M781 704.5H787M781 706.5H787" stroke="#5f7468" stroke-width="0.9"/>
<path d="M815.5 698.5H828.5V710.5H815.5Z M815.5 704.5H822.5V698.5 M818.5 698.5V704.5" fill="none" stroke="#5f7468" stroke-width="1.2"/>
<path d="M846 705H852" stroke="#5f7468" stroke-width="1.8"/><path d="M855 705.5H955.5" stroke="#c6c6c6" stroke-width="1"/><path d="M906.5 703V708" stroke="#a8a8a8" stroke-width="1"/><path d="M959.4 705H966.6M963 701.3V708.7" stroke="#5f7468" stroke-width="1.8"/>
</svg>
</body></html>
